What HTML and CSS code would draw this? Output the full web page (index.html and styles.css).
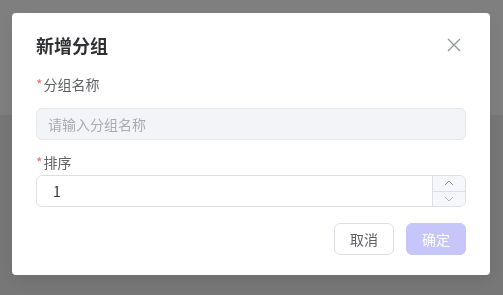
FILE: index.html
```html
<!DOCTYPE html>
<html lang="zh-CN">
<head>
  <meta charset="UTF-8" />
  <meta name="viewport" content="width=device-width, initial-scale=1" />
  <title>新增分组</title>
  <link rel="stylesheet" href="styles.css">
</head>
<body>
  <div class="page">
    <div class="page-top"></div>
    <div class="page-rest"></div>
  </div>
  <div class="overlay">
    <div class="dialog">
      <div class="dialog-header">
        <span class="dialog-title">新增分组</span>
        <button class="dialog-close" aria-label="关闭">
          <svg width="14" height="14" viewBox="0 0 14 14">
            <path d="M1 1 L13 13 M13 1 L1 13" stroke="#909399" stroke-width="1.2" fill="none" />
          </svg>
        </button>
      </div>
      <div class="dialog-body">
        <div class="form-item first">
          <label class="form-label"><span class="req">*</span>分组名称</label>
          <input class="text-input" type="text" placeholder="请输入分组名称" disabled />
        </div>
        <div class="form-item">
          <label class="form-label"><span class="req">*</span>排序</label>
          <div class="number-input">
            <input class="number-value" type="text" value="1" />
            <div class="number-controls">
              <span class="ctrl">
                <svg width="10" height="6" viewBox="0 0 10 6"><path d="M1 5 L5 1 L9 5" stroke="#909399" stroke-width="1" fill="none" /></svg>
              </span>
              <span class="ctrl">
                <svg width="10" height="6" viewBox="0 0 10 6"><path d="M1 1 L5 5 L9 1" stroke="#b1b3b8" stroke-width="1" fill="none" /></svg>
              </span>
            </div>
          </div>
        </div>
      </div>
      <div class="dialog-footer">
        <button class="btn">取消</button>
        <button class="btn btn-primary" disabled>确定</button>
      </div>
    </div>
  </div>
</body>
</html>
```

FILE: styles.css
```css
body {
  margin: 0;
  font-family: "Noto Sans CJK SC", "Noto Sans", sans-serif;
  width: 503px;
  height: 295px;
  overflow: hidden;
}
.page-top {
  height: 115px;
  background-color: #ffffff;
}
.page-rest {
  height: 180px;
  background-color: #efefef;
}
.overlay {
  position: fixed;
  inset: 0;
  background-color: rgba(0, 0, 0, 0.5);
  padding: 13px 13px 0 12px;
}
.dialog {
  background-color: #fff;
  border-radius: 4px;
  width: 478px;
  height: 262px;
  box-sizing: border-box;
  padding: 20px 24px 20px 24px;
  box-shadow: 0 6px 16px rgba(0, 0, 0, 0.08);
}
.dialog-header {
  display: flex;
  align-items: center;
  justify-content: space-between;
  height: 24px;
}
.dialog-title {
  font-size: 18px;
  font-weight: bold;
  color: #303133;
  line-height: 24px;
}
.dialog-close {
  border: none;
  background: none;
  padding: 0;
  margin-right: 5px;
  width: 14px;
  height: 14px;
  cursor: pointer;
}
.dialog-close svg {
  display: block;
}
.dialog-body {
  padding-top: 16px;
}
.form-item {
  margin-top: 11px;
}
.form-item.first {
  margin-top: 0;
}
.form-label {
  display: block;
  font-size: 14px;
  line-height: 22px;
  color: #606266;
  margin-bottom: 2px;
}
.form-item.first .form-label {
  margin-bottom: 13px;
}
.req {
  color: #f56c6c;
  margin-right: 1px;
}
.text-input {
  display: block;
  width: 100%;
  height: 32px;
  box-sizing: border-box;
  border: 1px solid #e4e7ed;
  border-radius: 6px;
  background-color: #f3f4f8;
  padding: 0 11px;
  font-family: inherit;
  font-size: 14px;
  color: #a8abb2;
}
.text-input::placeholder {
  color: #a8abb2;
}
.number-input {
  display: flex;
  height: 32px;
  box-sizing: border-box;
  border: 1px solid #dcdfe6;
  border-radius: 6px;
  overflow: hidden;
}
.number-value {
  flex: 1;
  border: none;
  outline: none;
  padding: 0 0 0 16px;
  font-family: inherit;
  font-size: 14px;
  color: #303133;
  min-width: 0;
}
.number-controls {
  width: 32px;
  display: flex;
  flex-direction: column;
  border-left: 1px solid #dcdfe6;
}
.ctrl {
  flex: 1;
  display: flex;
  align-items: center;
  justify-content: center;
  background-color: #f5f7fa;
}
.ctrl + .ctrl {
  border-top: 1px solid #dcdfe6;
}
.ctrl svg {
  display: block;
}
.dialog-footer {
  display: flex;
  justify-content: flex-end;
  gap: 12px;
  margin-top: 16px;
}
.btn {
  width: 60px;
  height: 32px;
  border: 1px solid #dcdfe6;
  border-radius: 6px;
  background-color: #fff;
  color: #606266;
  font-family: inherit;
  font-size: 14px;
  cursor: pointer;
}
.btn-primary {
  background-color: #c6c6fb;
  border-color: #c6c6fb;
  color: #fff;
  cursor: not-allowed;
}
```
